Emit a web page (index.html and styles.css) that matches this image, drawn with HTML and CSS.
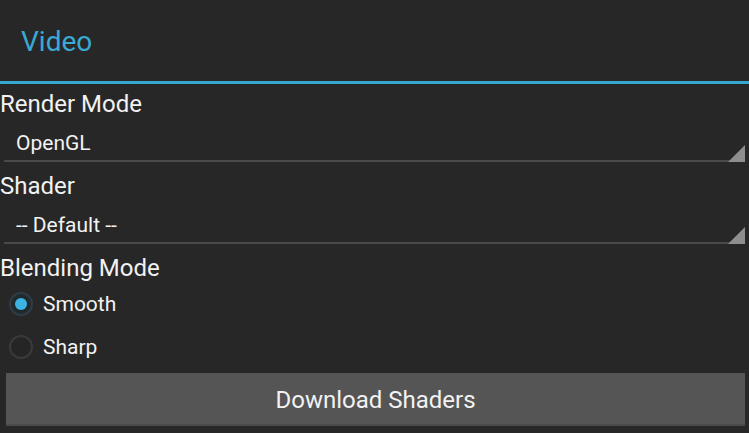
FILE: index.html
```html
<!DOCTYPE html>
<html>
<head>
<meta charset="utf-8">
<link rel="stylesheet" href="styles.css">
</head>
<body>
<div class="screen">
  <header class="header"><h1 class="title">Video</h1></header>
  <div class="rule"></div>
  <div class="label">Render Mode</div>
  <div class="spinner"><span class="value">OpenGL</span><span class="tri"></span></div>
  <div class="label">Shader</div>
  <div class="spinner"><span class="value">-- Default --</span><span class="tri"></span></div>
  <div class="label">Blending Mode</div>
  <div class="radio checked"><span class="dot"></span><span class="rtext">Smooth</span></div>
  <div class="radio"><span class="dot"></span><span class="rtext">Sharp</span></div>
  <button class="btn">Download Shaders</button>
</div>
</body>
</html>
```
FILE: styles.css
```css
html, body {
  margin: 0;
  padding: 0;
  background: #272727;
}
body {
  font-family: Roboto, "Noto Sans", sans-serif;
  color: #f2f2f2;
  width: 749px;
  height: 433px;
  overflow: hidden;
}
.screen {
  display: flex;
  flex-direction: column;
}
.header {
  height: 81px;
  display: flex;
  align-items: center;
  padding-left: 21px;
}
.title {
  margin: 0;
  font-weight: 400;
  font-size: 28px;
  color: #3aa9d4;
  padding-top: 2px;
}
.rule {
  height: 3px;
  background: #35a7d0;
}
.label {
  height: 34px;
  font-size: 24px;
  line-height: 28px;
  padding-top: 6px;
  box-sizing: border-box;
  white-space: nowrap;
}
.spinner {
  position: relative;
  height: 44px;
  margin: 0 4px 4px 4px;
  border-bottom: 2px solid #4a4a4a;
  box-sizing: border-box;
}
.value {
  display: block;
  font-size: 21px;
  line-height: 24px;
  padding-left: 12px;
  padding-top: 13px;
}
.tri {
  position: absolute;
  right: 0;
  bottom: -2px;
  width: 0;
  height: 0;
  border-style: solid;
  border-width: 0 0 17px 17px;
  border-color: transparent transparent #8e8e8e transparent;
}
.radio {
  height: 43px;
  display: flex;
  align-items: center;
  padding-left: 9px;
}
.dot {
  flex: none;
  width: 24px;
  height: 24px;
  border-radius: 50%;
  box-sizing: border-box;
  border: 2px solid #3a3a3a;
  background: #252525;
  position: relative;
}
.checked .dot {
  border-color: #2e3d44;
  background: #1f2a2f;
}
.checked .dot::after {
  content: "";
  position: absolute;
  left: 4px;
  top: 4px;
  width: 12px;
  height: 12px;
  border-radius: 50%;
  background: #3db3e3;
}
.rtext {
  font-size: 21px;
  padding-left: 10px;
  padding-top: 0;
}
.btn {
  margin: 5px 4px 0 6px;
  height: 53px;
  background: #555555;
  border: none;
  border-bottom: 2px solid #4a4a4a;
  color: #f2f2f2;
  font-family: Roboto, "Noto Sans", sans-serif;
  font-size: 24px;
  padding: 3px 0 0 0;
}
```
